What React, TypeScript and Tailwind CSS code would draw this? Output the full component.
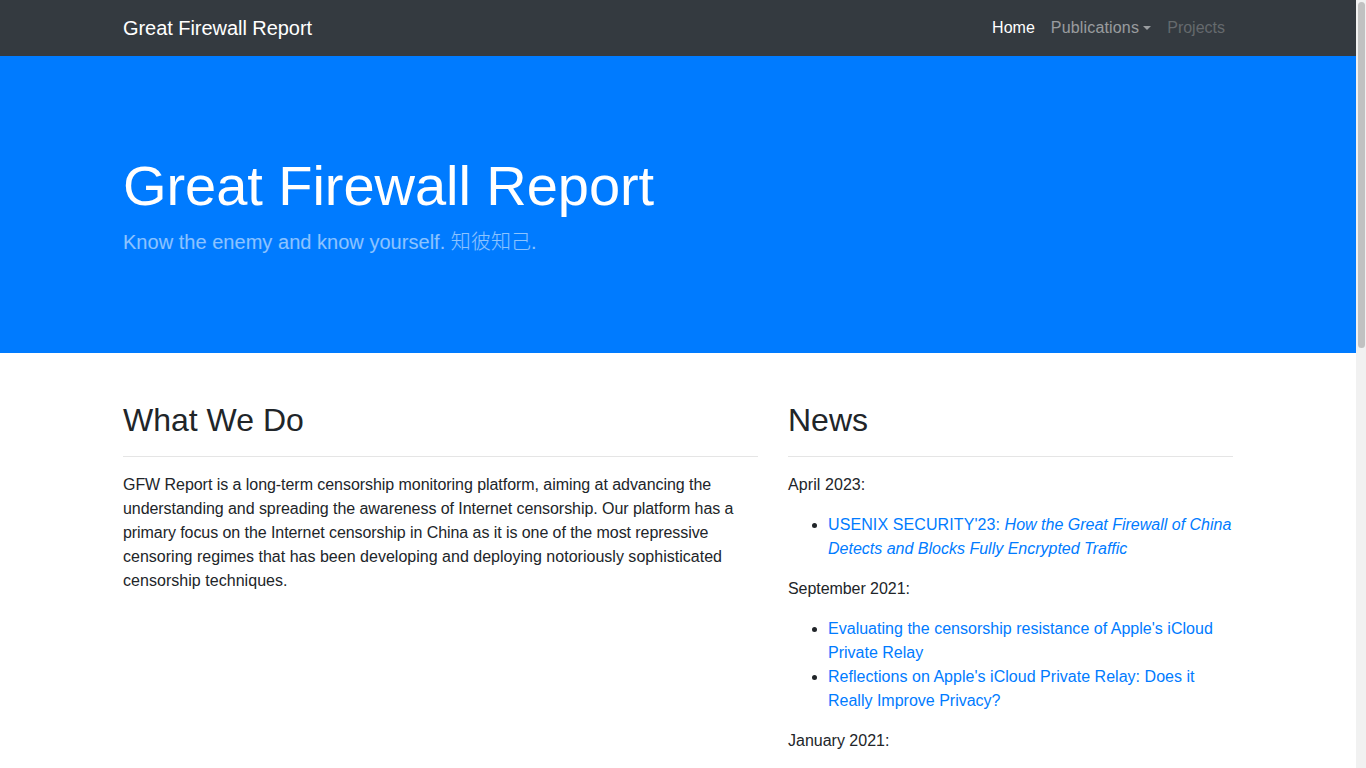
const lines: [string, string][] = [
  ["GFW Report is a long-term censorship monitoring platform, aiming at advancing the", "tracking-[-0.05px]"],
  ["understanding and spreading the awareness of Internet censorship. Our platform has a", "tracking-[-0.06px]"],
  ["primary focus on the Internet censorship in China as it is one of the most repressive", "tracking-[-0.07px]"],
  ["censoring regimes that has been developing and deploying notoriously sophisticated", "tracking-[0.015px]"],
  ["censorship techniques.", "tracking-[0.04px]"],
];
export default function App() {
  return (
    <div className="flex h-[768px] overflow-hidden font-['Liberation_Sans','Noto_Sans_CJK_SC',sans-serif] text-base leading-6 text-[#212529]">
      <div className="w-[1356px] shrink-0">
        <nav className="h-14 bg-[#343a40]">
          <div className="mx-auto flex h-14 w-[1140px] items-center justify-between px-[15px]">
            <span className="text-[20px] leading-[30px] tracking-[-0.05px] text-white">Great Firewall Report</span>
            <ul className="flex">
              <li className="p-2 text-white">Home</li>
              <li className="flex items-center p-2 text-white/50">
                <span className="tracking-[0.17px]">Publications</span>
                <span className="ml-[4.08px] h-0 w-0 border-x-[4.8px] border-t-[4.8px] border-x-transparent border-t-white/50" />
              </li>
              <li className="p-2 text-white/25">Projects</li>
            </ul>
          </div>
        </nav>
        <header className="h-[297px] bg-[#007bff]">
          <div className="mx-auto w-[1140px] px-[15px] pt-[96px]">
            <h1 className="text-[56px] leading-[67px] font-normal tracking-[-0.05px] text-white">Great Firewall Report</h1>
            <p className="mt-2 text-[20px] leading-[30px] font-light tracking-[0.03px] text-white/55">Know the enemy and know yourself. 知彼知己.</p>
          </div>
        </header>
        <main className="mx-auto flex w-[1140px] gap-[30px] px-[15px] pt-12">
          <section className="w-[635px]">
            <h2 className="text-[32px] leading-[38px] font-normal">What We Do</h2>
            <hr className="mt-[17px] mb-4 border-[#e5e5e5]" />
            <p>
              {lines.map(([t, c]) => (
                <span key={t} className={"block whitespace-nowrap " + c}>{t}</span>
              ))}
            </p>
          </section>
          <section className="w-[445px]">
            <h2 className="text-[32px] leading-[38px] font-normal">News</h2>
            <hr className="mt-[17px] mb-4 border-[#e5e5e5]" />
            <p className="mb-4 tracking-[0.08px]">April 2023:</p>
            <ul className="mb-4 list-disc pl-10">
              <li>
                <a className="text-[#007bff]"><span className="tracking-[0.1px]">USENIX SECURITY'23:</span> <em>How the Great Firewall of China Detects and Blocks Fully Encrypted Traffic</em></a>
              </li>
            </ul>
            <p className="mb-4 tracking-[-0.06px]">September 2021:</p>
            <ul className="mb-4 list-disc pl-10">
              <li><a className="text-[#007bff]"><span className="tracking-[0.02px]">Evaluating the censorship resistance of Apple's iCloud</span> Private Relay</a></li>
              <li><a className="text-[#007bff]"><span className="tracking-[0.03px]">Reflections on Apple's iCloud Private Relay: Does it</span> Really Improve Privacy?</a></li>
            </ul>
            <p>January 2021:</p>
          </section>
        </main>
      </div>
      <div className="relative h-[768px] w-[10px] bg-[#f1f1f1]">
        <div className="absolute left-[2px] top-[2px] h-[346px] w-[7px] rounded-[4px] bg-[#c1c1c1]" />
      </div>
    </div>
  );
}
